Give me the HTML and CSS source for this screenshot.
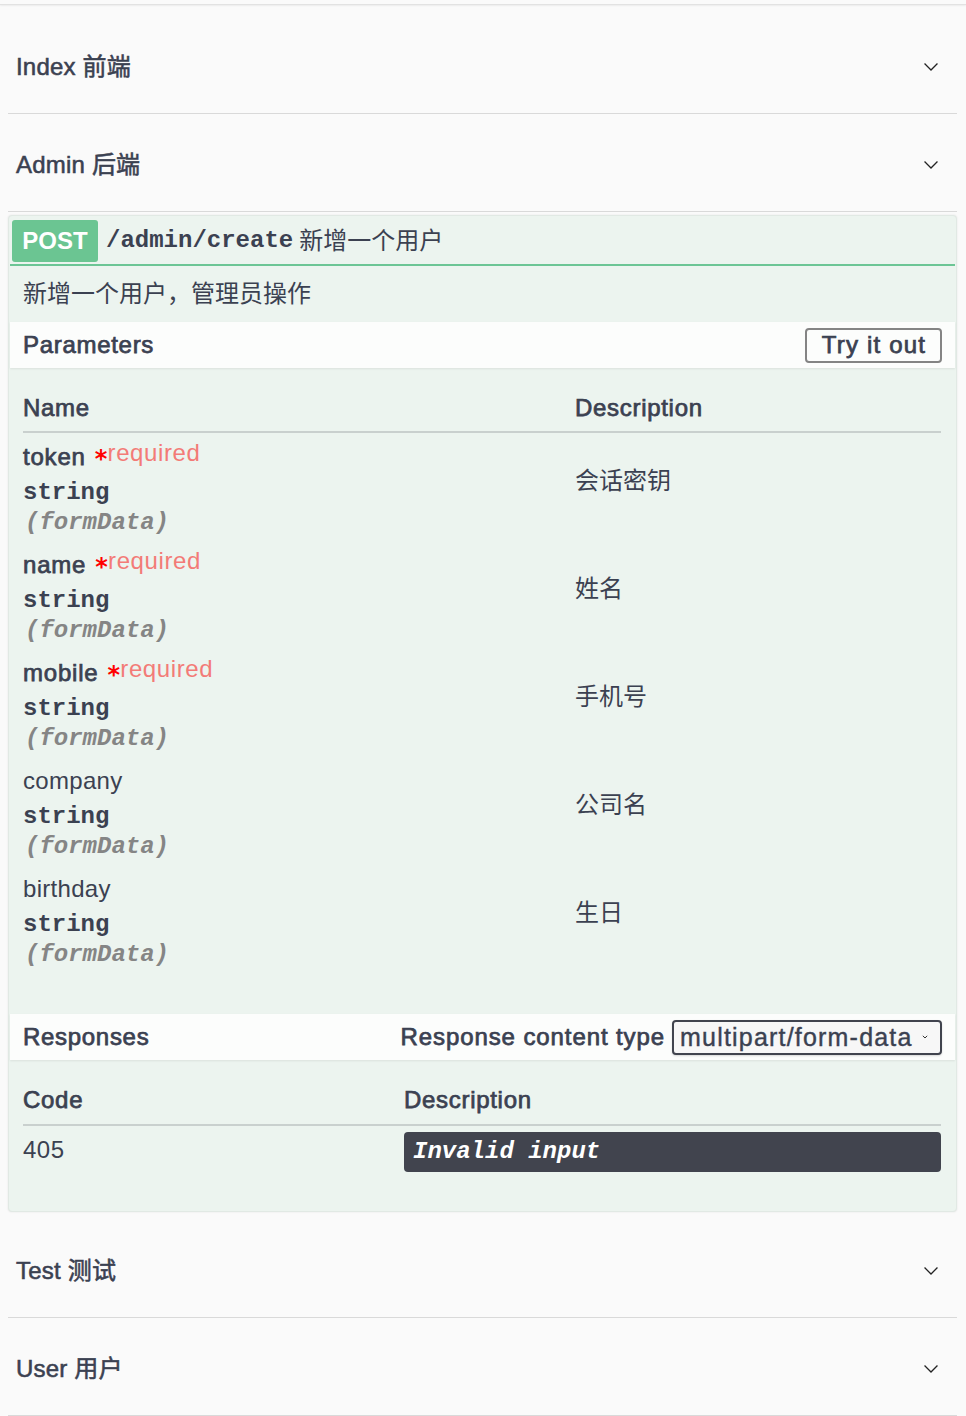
FILE: index.html
```html
<!DOCTYPE html>
<html lang="zh-CN">
<head>
<meta charset="utf-8">
<title>Swagger UI</title>
<link rel="stylesheet" href="styles.css">
</head>
<body>
<div class="topbar"></div>
<div class="wrapper">
  <section class="tag-section">
    <h3 class="tag"><span class="tag-name">Index 前端</span><svg class="chev" width="14" height="8" viewBox="0 0 14 8"><path d="M1 1 L7 7 L13 1"/></svg></h3>
  </section>
  <section class="tag-section">
    <h3 class="tag"><span class="tag-name">Admin 后端</span><svg class="chev" width="14" height="8" viewBox="0 0 14 8"><path d="M1 1 L7 7 L13 1"/></svg></h3>
    <div class="opblock">
      <div class="summary">
        <span class="method">POST</span>
        <span class="path">/admin/create</span>
        <span class="summary-desc">新增一个用户</span>
      </div>
      <div class="op-body">
        <div class="op-desc">新增一个用户，管理员操作</div>
        <div class="section-header">
          <h4 class="section-title">Parameters</h4>
          <button class="try">Try it out</button>
        </div>
        <div class="params">
          <div class="params-head">
            <div class="col-name">Name</div>
            <div class="col-desc">Description</div>
          </div>
          <div class="param-row">
            <div class="col-name">
              <div class="p-name req"><span class="req-name">token</span> <span class="star">*</span><span class="req-label">required</span></div>
              <div class="p-type">string</div>
              <div class="p-in">(formData)</div>
            </div>
            <div class="col-desc p-desc">会话密钥</div>
          </div>
          <div class="param-row">
            <div class="col-name">
              <div class="p-name req"><span class="req-name">name</span> <span class="star">*</span><span class="req-label">required</span></div>
              <div class="p-type">string</div>
              <div class="p-in">(formData)</div>
            </div>
            <div class="col-desc p-desc">姓名</div>
          </div>
          <div class="param-row">
            <div class="col-name">
              <div class="p-name req"><span class="req-name">mobile</span> <span class="star">*</span><span class="req-label">required</span></div>
              <div class="p-type">string</div>
              <div class="p-in">(formData)</div>
            </div>
            <div class="col-desc p-desc">手机号</div>
          </div>
          <div class="param-row">
            <div class="col-name">
              <div class="p-name">company</div>
              <div class="p-type">string</div>
              <div class="p-in">(formData)</div>
            </div>
            <div class="col-desc p-desc">公司名</div>
          </div>
          <div class="param-row">
            <div class="col-name">
              <div class="p-name">birthday</div>
              <div class="p-type">string</div>
              <div class="p-in">(formData)</div>
            </div>
            <div class="col-desc p-desc">生日</div>
          </div>
        </div>
        <div class="section-header">
          <h4 class="section-title">Responses</h4>
          <div class="ctype">
            <span class="ctype-label">Response content type</span>
            <div class="select">
              <span class="select-text">multipart/form-data</span>
              <svg class="sel-chev" width="6" height="4" viewBox="0 0 6 4"><path d="M0.8 0.8 L3 3 L5.2 0.8"/></svg>
            </div>
          </div>
        </div>
        <div class="responses">
          <div class="resp-head">
            <div class="col-code">Code</div>
            <div class="col-rdesc">Description</div>
          </div>
          <div class="resp-row">
            <div class="col-code code-val">405</div>
            <div class="col-rdesc"><div class="markdown">Invalid input</div></div>
          </div>
        </div>
      </div>
    </div>
  </section>
  <section class="tag-section">
    <h3 class="tag"><span class="tag-name">Test 测试</span><svg class="chev" width="14" height="8" viewBox="0 0 14 8"><path d="M1 1 L7 7 L13 1"/></svg></h3>
  </section>
  <section class="tag-section">
    <h3 class="tag"><span class="tag-name">User 用户</span><svg class="chev" width="14" height="8" viewBox="0 0 14 8"><path d="M1 1 L7 7 L13 1"/></svg></h3>
  </section>
</div>
</body>
</html>
```

FILE: styles.css
```css
* { box-sizing: border-box; }

html, body {
  margin: 0;
  padding: 0;
  background: #fafafa;
}

body {
  font-family: "Liberation Sans", "Noto Sans CJK SC", sans-serif;
  color: #3b4151;
  font-size: 24px;
  line-height: 30px;
}

.topbar {
  height: 5px;
  border-bottom: 1px solid #e2e2e2;
  box-shadow: 0 1px 2px rgba(0, 0, 0, 0.06);
}

.wrapper {
  padding: 11px 9px 0 8px;
}

.tag {
  margin: 0;
  height: 98px;
  border-bottom: 1px solid #d9d9d9;
  display: flex;
  align-items: center;
  justify-content: space-between;
  padding: 4px 19px 0 8px;
  font-size: 24px;
  font-weight: 400;
}

.tag-name {
  -webkit-text-stroke: 0.55px #3b4151;
  letter-spacing: 0.2px;
}

.chev {
  display: block;
  fill: none;
  stroke: #222;
  stroke-width: 1.3;
}

.chev path { stroke-linecap: square; }

/* opblock */
.opblock {
  margin: 3px 0 8px 0;
  background: #ecf4ef;
  border: 1px solid #e1e9e4;
  border-radius: 4px;
  box-shadow: 0 0 2px rgba(0, 0, 0, 0.1);
  padding-bottom: 39px;
}

.summary {
  display: flex;
  align-items: center;
  margin: 0 1px;
  padding: 4px 0 2px 2px;
  border-bottom: 2px solid #6cc595;
}

.method {
  width: 86px;
  height: 42px;
  border-radius: 3px;
  background: #6bc592;
  color: #fff;
  font-weight: 700;
  display: flex;
  align-items: center;
  justify-content: center;
}

.path {
  margin-left: 8px;
  font-family: "Liberation Mono", monospace;
  font-weight: 700;
  color: #3b4151;
}

.summary-desc {
  margin-left: 6px;
  color: #3b4151;
}

.op-body {
  padding: 0 1px;
}

.op-desc {
  padding: 13px 13px 13px;
}

.section-header {
  height: 46px;
  display: flex;
  align-items: center;
  justify-content: space-between;
  padding: 0 13px;
  background: rgba(255, 255, 255, 0.82);
  box-shadow: 0 1px 2px rgba(0, 0, 0, 0.08);
}

/* medium-weight text */
.section-title,
.params-head,
.resp-head,
.req-name,
.try,
.ctype-label {
  font-weight: 400;
  -webkit-text-stroke: 0.75px #3b4151;
  letter-spacing: 0.7px;
}

.section-title {
  margin: 0;
  font-size: 24px;
}

.try {
  width: 137px;
  height: 35px;
  border: 2px solid #848484;
  border-radius: 4px;
  background: transparent;
  font-family: inherit;
  font-size: 24px;
  letter-spacing: 1.2px;
  color: #3b4151;
  padding: 0 0 0 1px;
  line-height: 30px;
}

/* params table */
.params {
  padding: 0 14px 41px 13px;
}

.params-head {
  display: flex;
  padding: 25px 0 8px;
  border-bottom: 2px solid #c9d0ce;
}

.col-name {
  width: 552px;
  flex: none;
}

.col-desc {
  flex: 1;
}

.param-row {
  display: flex;
  height: 108px;
  padding-top: 9px;
}

.p-name {
  height: 30px;
  margin-bottom: 6px;
  letter-spacing: 0.3px;
}

.req-name {
  letter-spacing: 0.8px;
}

.star {
  font-family: "DejaVu Sans", sans-serif;
  font-weight: 700;
  color: #f00;
  font-size: 24px;
  line-height: 0;
  position: relative;
  top: 2px;
  margin-left: 2px;
}

.req-label {
  font-weight: 400;
  font-size: 24px;
  letter-spacing: 0.6px;
  color: #f37b77;
  position: relative;
  top: -4px;
}

.p-type {
  font-family: "Liberation Mono", monospace;
  font-weight: 700;
  letter-spacing: 0;
}

.p-in {
  font-family: "Liberation Mono", monospace;
  font-weight: 700;
  font-style: italic;
  color: #858585;
  padding-left: 2px;
  letter-spacing: 0;
}

.p-desc {
  padding-top: 24px;
}

/* content type select */
.ctype {
  display: flex;
  align-items: center;
}

.ctype-label {
  margin-right: 7px;
  letter-spacing: 0.9px;
}

.select {
  width: 270px;
  height: 35px;
  border: 2px solid #41444e;
  border-radius: 4px;
  background: #f7f7f7;
  box-shadow: 0 1px 2px rgba(0, 0, 0, 0.15);
  display: flex;
  align-items: center;
  justify-content: space-between;
  padding: 0 12px 0 6px;
}

.select-text {
  font-size: 25px;
  letter-spacing: 1.2px;
  -webkit-text-stroke: 0.4px #3b4151;
}

.sel-chev {
  display: block;
  fill: none;
  stroke: #333;
  stroke-width: 1;
}

/* responses */
.responses {
  padding: 0 14px 0 13px;
}

.resp-head {
  display: flex;
  padding: 25px 0 9px;
  border-bottom: 2px solid #c9d0ce;
}

.col-code {
  width: 381px;
  flex: none;
}

.col-rdesc {
  flex: 1;
}

.resp-row {
  display: flex;
  align-items: flex-start;
}

.code-val {
  padding-top: 9px;
  letter-spacing: 0.5px;
}

.resp-row .col-rdesc {
  padding-top: 6px;
}

.markdown {
  height: 40px;
  background: #41444e;
  border-radius: 4px;
  color: #fff;
  font-family: "Liberation Mono", monospace;
  font-weight: 700;
  font-style: italic;
  padding: 5px 9px;
  line-height: 30px;
}
```
